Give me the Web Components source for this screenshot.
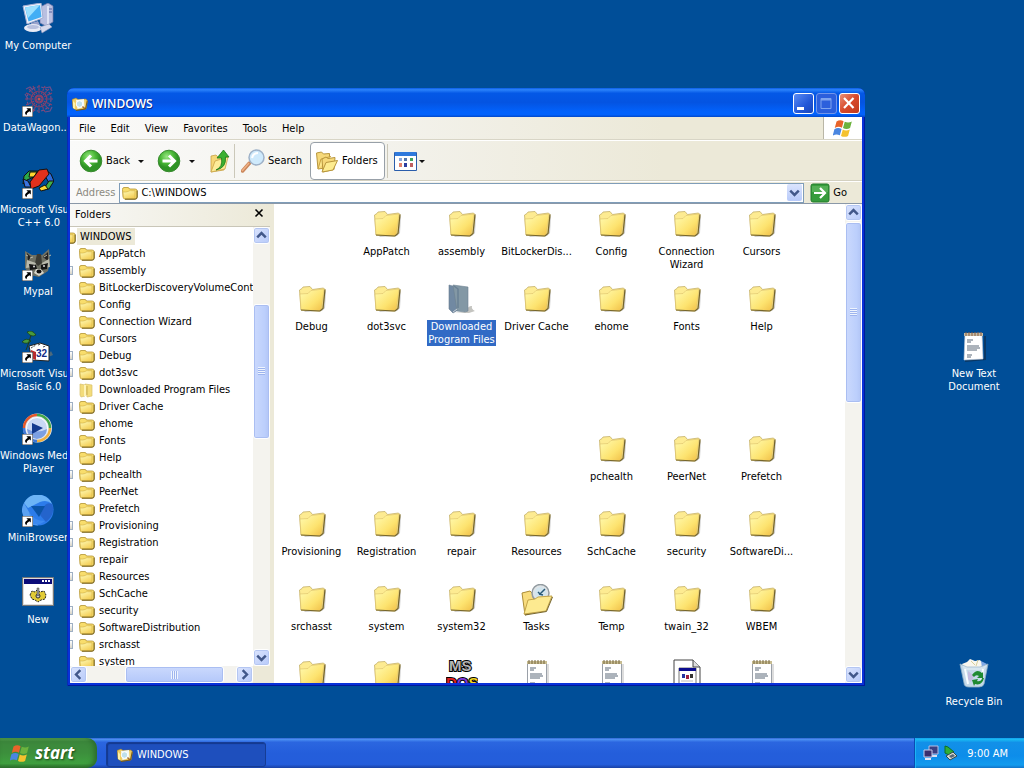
<!DOCTYPE html>
<html lang="en">
<head>
<meta charset="utf-8">
<title>WINDOWS</title>
<style>
  html, body { height: 100%; margin: 0; }
  body { font: 11px/13px "DejaVu Sans Condensed", "Noto Sans", sans-serif; color: #000; overflow: hidden; }
</style>
</head>
<body>
<xp-desktop>
  <desktop-icon slot="left" icon="computer">My Computer</desktop-icon>
  <desktop-icon slot="left" icon="wagon" shortcut>DataWagon....</desktop-icon>
  <desktop-icon slot="left" icon="vcpp" shortcut>Microsoft Visual<br>C++ 6.0</desktop-icon>
  <desktop-icon slot="left" icon="raccoon" shortcut>Mypal</desktop-icon>
  <desktop-icon slot="left" icon="vbasic" shortcut>Microsoft Visual<br>Basic 6.0</desktop-icon>
  <desktop-icon slot="left" icon="player" shortcut>Windows Media<br>Player</desktop-icon>
  <desktop-icon slot="left" icon="mini" shortcut>MiniBrowser</desktop-icon>
  <desktop-icon slot="left" icon="app">New</desktop-icon>
  <desktop-icon slot="right" icon="textfile">New Text<br>Document</desktop-icon>
  <desktop-icon slot="right" icon="recycle">Recycle Bin</desktop-icon>

  <explorer-window slot="window" heading="WINDOWS">
    <folder-tree slot="tree"></folder-tree>
    <file-grid slot="files"></file-grid>
  </explorer-window>

  <task-bar slot="taskbar" time="9:00 AM">
    <task-button>WINDOWS</task-button>
  </task-bar>
</xp-desktop>

<script>
(function () {
  // every icon is [viewBox size, markup]
  const FLAG = `<path d="M3 3q3-2 6-.3L7.600 8.200Q4.700 6.700 1.500 8.400z" fill="#e8642a"/><path d="M10 3.200q3 1.500 6-.2l-1.500 5.600q-3 1.600-6 0z" fill="#6cb33e"/><path d="M1.200 9.500q3-1.700 6.100-.2l-1.500 5.400q-3-1.500-6 .2z" fill="#4a86e0"/><path d="M8.300 9.800q3 1.500 6-.1l-1.500 5.500q-3 1.600-6 0z" fill="#f5c22e"/>`;
  const LINES = `<path d="M9 9h6M9 11h4M9 15h12M9 17h13M9 19h10M9 24h5M9 26h4" stroke="#5b6878"/>`;
  const ICONS = {
    flag: [17, FLAG],
    folder: [32, `<defs><linearGradient id="f" x2="1" y2="1"><stop stop-color="#fffcb4"/><stop offset=".6" stop-color="#fde36f"/><stop offset="1" stop-color="#efbc45"/></linearGradient></defs>
      <path d="M8 28l18-1 3-3 1-17-2 1z" fill="#555" opacity=".3"/>
      <path d="M3.500 6L6 4.500l1-1.500 7-.5L16.500 5.500l11-1.500 1.500 1.500-2 19-3 2.500-19-1z" fill="#fdeb92" stroke="#c4b06a" stroke-width=".8"/>
      <path d="M4 10l8-.5 3-3 13-1.500L25.500 25 23 27l-18-1z" fill="url(#f)" stroke="#dcc06a" stroke-width=".6"/>
      <path d="M29 5.500l-2 19-3 2.500-19-1" fill="none" stroke="#75652c" stroke-width="1.200"/>`],
    folderSmall: [16, `<defs><linearGradient id="s" x2=".6" y2="1"><stop stop-color="#fffcb8"/><stop offset="1" stop-color="#f4cf58"/></linearGradient></defs>
      <path d="M.500 4.500Q.500 2.500 2 2.500H6q1 0 1.500 1.500H13q2 0 2 1.500V12q0 2-2 2H3q-1.500 0-2-2z" fill="#f8dd6c" stroke="#b49432" stroke-width=".8"/>
      <path d="M1 7q3 .3 5-.5 1-.8 2.500-.8H13v7q0 1-1 1H3q-1.500 0-1.500-1.500z" fill="url(#s)" stroke="#d0ae48" stroke-width=".6"/>
      <path d="M15.200 5.500V12q0 2.200-2.200 2.200H3" fill="none" stroke="#75601c"/>`],
    ghostSmall: [16, `<path d="M1 2l5 1v11l-4 1-1-2zM6 2l7 1v11l-5 1z" fill="#f3dc7b" stroke="#d8c06a" stroke-width=".7"/><path d="M6 3v11" stroke="#fff4b8" stroke-width="2"/><path d="M8 4v9" stroke="#c9ae50"/>`],
    selected: [32, `<path d="M20 28q2-7 6-6-1 3 3 5l-6 2H8z" fill="#c4c4c0"/><path d="M3 1l7 2 2 23-5 3-4-4z" fill="#7189a2" stroke="#697c90" stroke-width=".6"/><path d="M7 1l15 2v24l-3 1-8-1z" fill="#8398a5" stroke="#6d8290" stroke-width=".6"/><path d="M8 2l4 3v19" fill="none" stroke="#6a8094" stroke-width="1.500"/><path d="M7 28l4-3" stroke="#c9d2d8"/>`],
    titleFolder: [16, `<path d="M0 3.500l4-1.500 2 1.500 8-.5 1.500 2-1.500 8-10 1L1 12z" fill="#f0cd62" stroke="#a07f2c" stroke-width=".6"/><path d="M4 4l8-1 .5 8-7 2z" fill="#f2f8f4"/><circle cx="7.500" cy="8" r="3.300" fill="#bfe0ec" stroke="#fff"/><path d="M10.500 10.500l2.500 2.500" stroke="#a86c30" stroke-width="1.500"/><path d="M1 5l2 2v6l-2-1z" fill="#fff3a8"/><path d="M15.200 5l-1.700 8-9.500 1.500" stroke="#75591a" fill="none"/>`],
    tasks: [32, `<path d="M1 9l8-2 3 3 2 18-10 3z" fill="#f8dc7d" stroke="#ab8c37"/><circle cx="19.500" cy="9" r="8.500" fill="#dfe4e7" stroke="#929ba0" stroke-width="1.500"/><circle cx="19.500" cy="9" r="6" fill="#d3e5ee"/><path d="M24 5l-5 5-2-2M18 10l4 1" stroke="#285a78" stroke-width="1.500" fill="none"/><path d="M3 30l4-14 7-1 3-2 14-1-6 15z" fill="#fdea90" stroke="#c4a448"/><path d="M31.500 13l-6 14.500L4 31" fill="none" stroke="#75652c"/>`],
    msdos: [32, `<g font-family="Liberation Sans" font-weight="700" font-size="15" stroke="#000" stroke-width="2" paint-order="stroke"><text x="3" y="12" fill="#b4b4b4">MS</text><text x="0" y="29" fill="#e02020">D<tspan fill="#7a38d8">O</tspan><tspan fill="#f2d620">S</tspan></text></g>`],
    exe: [32, `<path d="M3 1h19l7 7v24H3z" fill="#fff" stroke="#444"/><path d="M22 1v7h7" fill="#ddd" stroke="#444"/><path d="M8 9h17v16H8z" fill="#fff" stroke="#777"/><path d="M8 9h17v3H8z" fill="#0c0c8e"/><path d="M11 15h3v4h-3z" fill="#2434a0"/><path d="M15 16h3v4h-3z" fill="#a02040"/><path d="M19 15h3v4h-3z" fill="#333"/><path d="M10 22h12" stroke="#bbb"/>`],
    notepad: [32, `<path d="M7 29h20V5" fill="none" stroke="#777" opacity=".5"/><path d="M6.500 3h19v26h-19z" fill="#fff" stroke="#9aa0a8"/><path d="M6 2h20v3H6z" fill="#c8bd92"/><path d="M8 1v4M11 1v4M14 1v4M17 1v4M20 1v4M23 1v4" stroke="#75653c"/>${LINES}`],
    textfile: [32, `<path d="M7 30l20-2V5" fill="none" stroke="#123" stroke-width="2" opacity=".5"/><path d="M7 3l17-1 1 26-19 1z" fill="#fff" stroke="#c3cbd8" stroke-width=".6"/><path d="M6 2h19v3H6z" fill="#c4bda8"/><path d="M8 1v4M11 1v4M14 1v4M17 1v4M20 1v4M23 1v4" stroke="#8c5c3c"/>${LINES}`],
    computer: [32, `<path d="M18 4l8-4 5 3v16l-7 4-6-3z" fill="#b9bfe0" stroke="#6d76a8" stroke-width=".7"/><path d="M26 3v18" stroke="#dfe3f5" stroke-width="2"/><path d="M27 6h3M27 9h3" stroke="#5563a0"/><path d="M1 3l18-3 2 15-16 6z" fill="#eef1fb" stroke="#a3aed2"/><path d="M3 4.500L18 2l1.500 12L6.500 18.500z" fill="#42aef5"/><path d="M3 4.500L18 2 6 15z" fill="#9be0ff"/><path d="M9 20l7-2 2 4-8 3z" fill="#9aa3cc"/><ellipse cx="11" cy="25" rx="9" ry="4" fill="#e8ebf6"/><ellipse cx="11" cy="24" rx="6" ry="2" fill="#b8c0de"/><path d="M18 24l9-3 3 3-10 6z" fill="#d5d9ec" stroke="#8e97be" stroke-width=".6"/>`],
    wagon: [32, `<g fill="none" stroke="#8b3f68" stroke-width="1.200"><circle cx="17" cy="14" r="4"/><circle cx="17" cy="14" r="8"/><circle cx="17" cy="14" r="12" stroke-dasharray="3 1.500" stroke="#74508a"/><path d="M17 0v28M3 14h28M7 4l20 20M27 4L7 24M11 1l12 26M23 1L11 27M4 8l26 12M30 8L4 20" stroke-dasharray="2 1.300"/><path d="M4 4l4-2 3 3M23 3l5-1 2 4M30 22l-2 4-5 1M3 9l3 5" stroke="#6c4f8c"/></g><circle cx="17" cy="14" r="1.500" fill="#c25050"/>`],
    vcpp: [32, `<g stroke="#111"><path d="M7 4l9 0-2 5-9 4-4 4 1-8z" fill="#2ba84a"/><path d="M8 5l7 0-3 5-5 0z" fill="#ffd830"/><path d="M1 12l5 2 3 6-6 0z" fill="#3c74e0"/><path d="M25 4l4 3 3 7-5 2-5-9z" fill="#2f6bd8"/><path d="M27 14l5 0-5 8-6 1z" fill="#42b04a"/><path d="M17 21l6-3 3 4-7 2z" fill="#ffd830"/><path d="M8 15L17 3l8-1 2 5-10 12-8 3z" fill="#e2311d"/></g>`],
    raccoon: [32, `<path d="M3 2l7 4h10l7-6 1 13-2 9-9 6-9-2-5-7z" fill="#6e7064"/><path d="M5 4l4 4-3 4zM26 3l-5 5 5 4z" fill="#222"/><path d="M15 5h4l1 9-4 3-3-3z" fill="#3b3b34"/><path d="M5 11l9 3-2 4-8 1zM20 14l7-4 1 8-7 1z" fill="#b9baad"/><path d="M7 15l7 1 1 4-7 1zM19 16l7-2-1 6-6 1z" fill="#151515"/><circle cx="12" cy="17.500" r="1" fill="#ddd"/><circle cx="22" cy="17" r="1" fill="#ddd"/><path d="M14 20h5l3 4-5 3-5-3z" fill="#d8d6ca"/><ellipse cx="17" cy="22.500" rx="2.500" ry="2" fill="#111"/><path d="M4 6l2 1M27 7l2-1M8 9l3-1M22 8l3-2" stroke="#b9b9a8"/>`],
    vbasic: [32, `<path d="M24 27l7-3-2-4z" fill="#4e6a7c"/><path d="M5 1q5-3 9 3-5 3-9-3zM0 11q4-5 9-1-4 4-9 1z" fill="#4a9a3c" stroke="#143c12" stroke-width=".7"/><path d="M9 4q-2 8-5 15" stroke="#223c18" fill="none"/><path d="M7 15l11-3 9 3v15l-17-1z" fill="#fff" stroke="#222"/><path d="M9 17l5-3M16 14l3-1M21 16l3-1" stroke="#444" stroke-dasharray="2 1"/><path d="M9 19l5 2v8l-5-2z" fill="#b82c2c"/><text x="14" y="26" font-family="Liberation Sans" font-weight="700" font-size="10" fill="#102a86">32</text>`],
    player: [32, `<circle cx="15.500" cy="15" r="14.500" fill="#dfe6ee"/><path d="M15 2a13 13 0 0 1 13 13" stroke="#42a648" stroke-width="2.500" fill="none"/><path d="M28 15a13 13 0 0 1-13 13" stroke="#f0b040" stroke-width="2.500" fill="none"/><path d="M15 28A13 13 0 0 1 2 15" stroke="#3f78d8" stroke-width="2.500" fill="none"/><path d="M2 15A13 13 0 0 1 15 2" stroke="#e4582c" stroke-width="2.500" fill="none"/><circle cx="15" cy="15" r="10.500" fill="#c9d8f4" stroke="#fff"/><path d="M5 16q10 5 20 0a10 10 0 0 1-20 0" fill="#7c9fe2"/><path d="M10 10l11 5-11 6z" fill="#143a8e"/>`],
    mini: [32, `<circle cx="16" cy="15" r="15.500" fill="#2c7cea"/><path d="M2 8A15.500 15.500 0 0 1 30 9Q25 4 18 7L6 13z" fill="#6cb4f6"/><path d="M30 9q4 10-6 18l-6-7 5-10q3-3 7-1z" fill="#2464cc"/><path d="M2 8q-5 9 2 17 5 5 12 5.500L7 17z" fill="#5ba2f2"/><path d="M7 17q5 9 16 9-6 5-13 3z" fill="#3c8af0"/><path d="M9 11h14l-6 11z" fill="#0b55a8"/>`],
    app: [32, `<path d="M.5.500h31v28H.5z" fill="#ddd" stroke="#777"/><path d="M2 2h28v5H2z" fill="#0b0b78"/><path d="M20 4h2M23 4h2M26 4h2" stroke="#fff" stroke-width="2"/><path d="M2 7h28v20H2z" fill="#fff"/><path d="M8 18l2-4 3 1 2-2 3 2 4-1 2 4-1 4-4 1-3 2-3-2-3-1z" fill="#e2cb35" stroke="#222" stroke-dasharray="2 1"/><circle cx="16" cy="19" r="2" fill="#fff" stroke="#222"/><path d="M15 11h2v8h-2z" fill="#999" stroke="#444" stroke-width=".5"/>`],
    recycle: [32, `<path d="M4 5l5-2 3-3 5 2 5-1 3 4 4 1-3 5H6z" fill="#f8f6ee"/><path d="M13 2l4 4M20 1l-2 6" stroke="#d7cf9c"/><path d="M23 2l6 3-5 4z" fill="#7fa9e6"/><path d="M2 5l7 3h13l8-3-4 20q-1 3-5 3H11q-5 0-5-4z" fill="#d5e5f0" opacity=".92" stroke="#9bb7ca" stroke-width=".8"/><path d="M7 10l3 15M25 10l-2 14" stroke="#f8fdff" stroke-width="2"/><path d="M10 12l6 5-3 6-3-3z" fill="#c4bce0"/><path d="M14 16q5-7 10-2l1-1v6h-6l2-2q-3-2-5 1zM26 19q-2 8-9 6l-1 2-2-6 6-1-1 2q4 1 5-3z" fill="#1f8a32"/>`],
    back: [24, `<defs><radialGradient id="g" cx=".4" cy=".3"><stop stop-color="#9ae684"/><stop offset=".6" stop-color="#4cba38"/><stop offset="1" stop-color="#2f9426"/></radialGradient></defs><circle cx="12" cy="12" r="10.800" fill="url(#g)" stroke="#3a8a30"/><path d="M18.500 12H7M12 6.500L6.500 12l5.500 5.500" stroke="#fff" stroke-width="3" fill="none"/>`],
    forward: [24, `<defs><radialGradient id="g" cx=".4" cy=".3"><stop stop-color="#9ae684"/><stop offset=".6" stop-color="#4cba38"/><stop offset="1" stop-color="#2f9426"/></radialGradient></defs><circle cx="12" cy="12" r="10.800" fill="url(#g)" stroke="#3a8a30"/><path d="M5.500 12H17M12 6.500l5.500 5.500-5.500 5.500" stroke="#fff" stroke-width="3" fill="none"/>`],
    up: [24, `<path d="M3 7l5-1 2 2 7-1-1 14-13 2z" fill="#f6d777" stroke="#c29a38" stroke-width=".7"/><path d="M3 23l4-11 13-4-3 12z" fill="#fdec98" stroke="#caa548" stroke-width=".8"/><path d="M8 21q7-3 5.500-12H9L15.500 1 21 8h-3.500q1 11-9.500 13z" fill="#3cb030" stroke="#1d7a1a" stroke-width=".8"/>`],
    search: [24, `<path d="M1.500 22l7-8" stroke="#c9855a" stroke-width="3.500" stroke-linecap="round"/><path d="M1 22l7-8" stroke="#f0b184" stroke-width="1.500"/><circle cx="15.500" cy="8.500" r="7.500" fill="#cfeafc" stroke="#9fb2c8" stroke-width="1.500"/><path d="M11 9q1-5 6-5" stroke="#fff" stroke-width="2" fill="none"/>`],
    folders: [24, `<path d="M1.500 4l5-1 2 2 6-.5v14L3 20z" fill="#f6d97a" stroke="#b8963d"/><path d="M3 20l3-10 10-2.500" fill="#fdea90" stroke="#c8a040"/><path d="M7 10l4-2 2 1.500 7-1-1 12-11 2.500z" fill="#f6d97a" stroke="#b8963d"/><path d="M7 23l4-9.500 11.500-2L18 21z" fill="#fdec90" stroke="#b8963d"/>`],
    views: [24, `<path d="M.5 3.500h22v18H.5z" fill="#fff" stroke="#2a5dab"/><path d="M1 3h21v4H1z" fill="#2f79dc"/><path d="M5 9h3v3H5z" fill="#86a6dc"/><path d="M10 9h3v3h-3z" fill="#5577aa"/><path d="M16 9h3v3h-3z" fill="#3fa25c"/><path d="M5 14h3v4H5z" fill="#e2836c"/><path d="M10 14h3v4h-3z" fill="#2d3ea0"/><path d="M16 14h3v4h-3z" fill="#c06060"/>`],
    go: [20, `<rect x="1" y="1" width="18" height="18" rx="2" fill="#379c3c" stroke="#237a2c"/><path d="M2 3h16v6H2z" fill="#67bc65" opacity=".6"/><path d="M4 10h10M10 5l5 5-5 5" stroke="#fff" stroke-width="2.200" fill="none"/>`],
    chevron: [9, `<path d="M1 3l3.500 3.500L8 3" fill="none" stroke="#42588a" stroke-width="2"/>`],
    caret: [6, `<path d="M0 2h6L3 5z" fill="#111"/>`],
    network: [16, `<path d="M6 1h9v8H6z" fill="#3a3f82" stroke="#b6bde4"/><path d="M8 11h6" stroke="#dadff2" stroke-width="2"/><path d="M1 5h8v7H1z" fill="#3a2f6c" stroke="#c6cbea"/><path d="M2 14h6" stroke="#e2e5f4" stroke-width="2"/>`],
    usb: [16, `<path d="M2 1l3 1 6 5-5 3-4-2z" fill="#2fae38" stroke="#0e6e24"/><path d="M3 11l7-4 4 4-7 4z" fill="#d9dcd2" stroke="#30484c"/><path d="M6 11l4-2 2 2-4 2z" fill="#567"/>`],
    minimize: [21, `<path d="M4 14h7v3H4z" fill="#fff"/>`],
    maximize: [21, `<path d="M5 5.500h10v10H5z" fill="none" stroke="#7fa4ef"/><path d="M5 6.500h10" stroke="#7fa4ef" stroke-width="2"/>`],
    close: [21, `<path d="M5 5l9.500 10M14.500 5L5 15" stroke="#fff" stroke-width="2.200"/>`],
    cross: [10, `<path d="M1.500 1.500l7 7M8.500 1.500l-7 7" stroke="#000" stroke-width="1.600"/>`],
    arrow: [10, `<path d="M0 0h10v10H0z" fill="#fff" stroke="#333"/><path d="M4 2h4v4L6.700 4.800Q4 6 4 8.500 1 6 5.300 3.400z" fill="#000"/>`],
  };

  function define(name, html, setup) {
    if (customElements.get(name)) return;
    const tpl = document.createElement('template');
    tpl.innerHTML = html;
    customElements.define(name, class extends HTMLElement {
      connectedCallback() {
        if (this.shadowRoot) return;
        const root = this.attachShadow({ mode: 'open' });
        root.appendChild(tpl.content.cloneNode(true));
        if (setup) setup(this, root);
      }
    });
  }

  // <xp-icon name size>
  define('xp-icon', `<style>:host { display:block; flex:none; } svg { display:block; }</style>`, (host, root) => {
    const [box, body] = ICONS[host.getAttribute('name')];
    const size = host.getAttribute('size') || box;
    const holder = document.createElement('div');
    holder.innerHTML = `<svg width="${size}" height="${size}" viewBox="0 0 ${box} ${box}" aria-hidden="true">${body}</svg>`;
    root.appendChild(holder.firstChild);
  });

  define('xp-desktop', `
    <style>
      :host { display:flex; flex-direction:column; height:100vh; background:#004e98; }
      main { position:relative; flex:1; min-height:0; display:flex; justify-content:space-between; overflow:hidden; }
      .left, .right { display:flex; flex-direction:column; }
      .right { justify-content:flex-end; gap:246px; padding:0 12px 0 0; }
      ::slotted([slot=window]) { position:absolute; inset:88px 159px 52px 67px; }
    </style>
    <main>
      <div class="left"><slot name="left"></slot></div>
      <div class="right"><slot name="right"></slot></div>
      <slot name="window"></slot>
    </main>
    <slot name="taskbar"></slot>`);

  define('desktop-icon', `
    <style>
      :host { display:flex; flex-direction:column; align-items:safe center; gap:4px; flex:none;
              box-sizing:border-box; width:76px; height:82px; padding-top:3px; color:#fff; text-align:center; white-space:nowrap; }
      .art { position:relative; }
      .badge { position:absolute; left:0; bottom:0; }
    </style>
    <div class="art"></div>
    <span><slot></slot></span>`, (host, root) => {
    root.querySelector('.art').innerHTML = `<xp-icon name="${host.getAttribute('icon')}" size="32"></xp-icon>` +
      (host.hasAttribute('shortcut') ? '<xp-icon class="badge" name="arrow" size="11"></xp-icon>' : '');
  });

  // scroll bar; before / thumb / after are proportions of the track
  define('scroll-bar', `
    <style>
      :host { display:flex; flex-direction:column; flex:none; width:17px; background:#f4f3ee; }
      :host([horizontal]) { flex-direction:row; width:auto; height:17px; }
      button { flex:none; width:17px; height:17px; padding:0; border:1px solid #fff; border-radius:3px;
               background:linear-gradient(135deg, #dbe4fd, #b7cafa); box-shadow:inset 0 0 0 1px #b4c6f2;
               display:flex; align-items:center; justify-content:center; }
      .thumb { box-sizing:border-box; border:1px solid #fff; border-radius:3px; box-shadow:inset 0 0 0 1px #aabef2;
               background:linear-gradient(90deg, #cbd9fd, #bccffc 70%, #b2c5f6);
               display:flex; align-items:center; justify-content:center; }
      :host([horizontal]) .thumb { background:linear-gradient(#cbd9fd, #b4c8fa); }
      .grip { width:7px; height:8px; background:repeating-linear-gradient(#eef4fe 0 1px, #9db4ee 1px 2px); }
      :host([horizontal]) .grip { background:repeating-linear-gradient(90deg, #eef4fe 0 1px, #9db4ee 1px 2px); }
      .track { flex:1; display:flex; flex-direction:inherit; }
      .first { transform:rotate(180deg); }
      :host([horizontal]) .first { transform:rotate(90deg); }
      :host([horizontal]) .last { transform:rotate(-90deg); }
    </style>
    <button type="button" aria-label="Back"><xp-icon class="first" name="chevron" size="11"></xp-icon></button>
    <div class="track"><div></div><div class="thumb"><div class="grip"></div></div><div></div></div>
    <button type="button" aria-label="Forward"><xp-icon class="last" name="chevron" size="11"></xp-icon></button>`, (host, root) => {
    const parts = root.querySelector('.track').children;
    host.getAttribute('parts').split(' ').forEach((n, i) => { parts[i].style.flex = `${n} 0 0`; });
  });

  define('explorer-window', `
    <style>
      :host { display:flex; flex-direction:column; box-sizing:border-box; padding:0 3px 3px; background:#0831d9;
              border-radius:7px 7px 0 0; overflow:hidden; box-shadow:inset 1px 0 #0a2bb0, inset -1px -1px #001a9c; }
      button { font:inherit; color:inherit; background:none; border:0; padding:0; }
      header { display:flex; align-items:center; gap:4px; height:29px; margin:0 -3px; padding:2px 5px 0; box-sizing:border-box; color:#fff;
               background:linear-gradient(#0a5ce6, #2b83fb 6%, #0458e6 18%, #0454e2 50%, #0262fc 82%, #0262fc 92%, #0348c8); }
      h1 { flex:1; margin:0; font:600 12px/16px "Open Sans", "Noto Sans", sans-serif; text-shadow:1px 1px #0a2a8c; }
      .caption { display:flex; gap:2px; }
      .caption button { width:21px; height:21px; box-sizing:border-box; border:1px solid #fff; border-radius:3px;
                        display:flex; align-items:center; justify-content:center; background:linear-gradient(135deg, #5b8cf4, #2257d8 60%, #1945b8); }
      .caption .off { border-color:#7396ea; background:#2c5fdc; }
      .caption .shut { background:linear-gradient(135deg, #e99179, #d8492a 50%, #c03a1c); }
      .bar { display:flex; align-items:center; box-sizing:border-box; background:linear-gradient(90deg, #fafaf9, #f3f2ec 40%, #ece9d8 75%); }
      nav { height:23px; border-bottom:1px solid #d8d5c6; }
      nav div { flex:1; display:flex; gap:15px; padding-left:9px; }
      .logo { align-self:stretch; width:39px; box-sizing:border-box; display:flex; align-items:center; justify-content:center; background:#fff; border-left:1px solid #b9b6a6; }
      .tools { height:41px; padding-left:9px; border-bottom:1px solid #d3d0c0; border-top:1px solid #fff; }
      .tools button { display:flex; align-items:center; gap:3px; }
      .tools .drop { padding:0 13px 0 8px; }
      .sep { width:1px; height:34px; background:#cbc8b9; margin:0 6px 0 2px; }
      .tools .pressed { box-sizing:border-box; width:75px; height:38px; margin-left:8px; padding-left:4px; background:#fff; border:1px solid #98a0a8; border-radius:4px; }
      .tools .views { gap:1px; }
      .address { height:22px; gap:4px; padding-left:6px; border-top:1px solid #fff; }
      .address label { color:#8c8a80; }
      .combo { flex:1; display:flex; align-items:center; gap:3px; height:20px; box-sizing:border-box; padding:1px 1px 1px 2px; background:#fff; border:1px solid #7f9db9; }
      input { flex:1; min-width:0; border:0; padding:0; outline:0; font:inherit; color:#000; background:none; }
      .combo button { width:15px; height:17px; background:linear-gradient(#dbe4fd, #b7cafa); display:flex; align-items:center; justify-content:center; border-radius:2px; }
      .go { display:flex; align-items:center; gap:3px; margin:0 15px 0 2px; }
      .content { flex:1; min-height:0; display:flex; background:#fff; border-top:1px solid #8a98a8; }
      ::slotted([slot=tree]) { flex:none; width:204px; box-sizing:border-box; }
      ::slotted([slot=files]) { flex:1; min-width:0; }
    </style>
    <header>
      <xp-icon name="titleFolder" size="16"></xp-icon>
      <h1></h1>
      <div class="caption">
        <button type="button" aria-label="Minimize"><xp-icon name="minimize"></xp-icon></button>
        <button type="button" aria-label="Maximize" class="off"><xp-icon name="maximize"></xp-icon></button>
        <button type="button" aria-label="Close" class="shut"><xp-icon name="close"></xp-icon></button>
      </div>
    </header>
    <nav class="bar">
      <div>
        <button type="button">File</button><button type="button">Edit</button><button type="button">View</button>
        <button type="button">Favorites</button><button type="button">Tools</button><button type="button">Help</button>
      </div>
      <span class="logo"><xp-icon name="flag" size="20"></xp-icon></span>
    </nav>
    <div class="bar tools">
      <button type="button"><xp-icon name="back" size="24"></xp-icon>Back</button>
      <button type="button" class="drop" aria-label="Back history"><xp-icon name="caret"></xp-icon></button>
      <button type="button" aria-label="Forward"><xp-icon name="forward" size="24"></xp-icon></button>
      <button type="button" class="drop" aria-label="Forward history"><xp-icon name="caret"></xp-icon></button>
      <button type="button" aria-label="Up"><xp-icon name="up" size="24"></xp-icon></button>
      <span class="sep"></span>
      <button type="button"><xp-icon name="search" size="24"></xp-icon>Search</button>
      <button type="button" class="pressed"><xp-icon name="folders" size="24"></xp-icon>Folders</button>
      <span class="sep"></span>
      <button type="button" class="views" aria-label="Views"><xp-icon name="views" size="24"></xp-icon><xp-icon name="caret"></xp-icon></button>
    </div>
    <div class="bar address">
      <label for="path">Address</label>
      <div class="combo">
        <xp-icon name="folderSmall" size="16"></xp-icon>
        <input id="path" type="text" value="C:\\WINDOWS">
        <button type="button" aria-label="Show addresses"><xp-icon name="chevron" size="11"></xp-icon></button>
      </div>
      <button type="button" class="go"><xp-icon name="go" size="20"></xp-icon>Go</button>
    </div>
    <div class="content"><slot name="tree"></slot><slot name="files"></slot></div>`, (host, root) => {
    root.querySelector('h1').textContent = host.getAttribute('heading');
  });

  // + in front of a name marks a folder with children
  const TREE = ['AppPatch', '+assembly', 'BitLockerDiscoveryVolumeContents', 'Config', 'Connection Wizard', 'Cursors',
    '+Debug', '+dot3svc', 'Downloaded Program Files', '+Driver Cache', 'ehome', 'Fonts', 'Help', '+pchealth', 'PeerNet',
    'Prefetch', '+Provisioning', '+Registration', 'repair', '+Resources', 'SchCache', '+security',
    '+SoftwareDistribution', '+srchasst', 'system'];

  define('folder-tree', `
    <style>
      :host { display:flex; flex-direction:column; border-right:4px solid #ece9d8; background:#fff; }
      header { display:flex; justify-content:space-between; height:23px; box-sizing:border-box; padding:4px 6px 0 5px;
               background:linear-gradient(90deg, #f8f8f6, #ece9d8); border-bottom:1px solid #c9c6b8; }
      header button { border:0; background:none; padding:0; align-self:flex-start; }
      .body { flex:1; min-height:0; display:flex; }
      .view { flex:1; min-width:0; overflow:hidden; padding-top:1px; }
      ul { list-style:none; margin:0 0 0 -6px; padding:0; }
      li { display:flex; align-items:center; height:17px; white-space:nowrap; gap:4px; }
      .box { flex:none; box-sizing:border-box; width:9px; height:9px; margin-right:2px; }
      .box.on { border:1px solid #9fb0c4; background:linear-gradient(#fff, #d8d4c6); }
      .root { gap:1px; margin-left:-4px; }
      .root span { background:#ece9d8; padding:2px 3px; }
      footer { display:flex; background:#ece9d8; }
      scroll-bar[horizontal] { flex:1; margin-right:17px; }
    </style>
    <header>Folders<button type="button" aria-label="Close folders"><xp-icon name="cross" size="10"></xp-icon></button></header>
    <div class="body">
      <div class="view"><ul><li class="root"><xp-icon name="folderSmall" size="16"></xp-icon><span>WINDOWS</span></li></ul></div>
      <scroll-bar parts="60 134 211"></scroll-bar>
    </div>
    <footer><scroll-bar horizontal parts="39 98 12"></scroll-bar></footer>`, (host, root) => {
    const ul = root.querySelector('ul');
    TREE.forEach((entry) => {
      const name = entry.replace('+', '');
      const icon = name === 'Downloaded Program Files' ? 'ghostSmall' : 'folderSmall';
      ul.insertAdjacentHTML('beforeend',
        `<li><i class="box${name !== entry ? ' on' : ''}"></i><xp-icon name="${icon}" size="16"></xp-icon><span>${name}</span></li>`);
    });
  });

  define('file-item', `
    <style>
      :host { display:flex; flex-direction:column; align-items:center; gap:4px; text-align:center; white-space:nowrap; }
      .name { padding:0 1px; }
      :host([selected]) .name { background:#316ac5; color:#fff; }
    </style>
    <span class="name"><slot></slot></span>`, (host, root) => {
    root.querySelector('.name').insertAdjacentHTML('beforebegin', `<xp-icon name="${host.getAttribute('icon')}" size="32"></xp-icon>`);
  });

  // null leaves a slot of the grid empty
  const gap = (n) => Array(n).fill(null);
  const FILES = [null, 'AppPatch', 'assembly', 'BitLockerDis...', 'Config', 'Connection<br>Wizard', 'Cursors',
    'Debug', 'dot3svc', 'Downloaded<br>Program Files|selected', 'Driver Cache', 'ehome', 'Fonts', 'Help',
    ...gap(11), 'pchealth', 'PeerNet', 'Prefetch',
    'Provisioning', 'Registration', 'repair', 'Resources', 'SchCache', 'security', 'SoftwareDi...',
    'srchasst', 'system', 'system32', 'Tasks|tasks', 'Temp', 'twain_32', 'WBEM',
    '|folder', '|folder', '|msdos', '|notepad', '|notepad', '|exe', '|notepad'];

  define('file-grid', `
    <style>
      :host { display:flex; background:#fff; }
      .view { flex:1; min-width:0; overflow:hidden; padding-top:5px; }
      .grid { display:grid; grid-template-columns:repeat(auto-fill, 75px); grid-auto-rows:75px; }
    </style>
    <div class="view"><div class="grid"></div></div>
    <scroll-bar parts="1 180 265"></scroll-bar>`, (host, root) => {
    root.querySelector('.grid').innerHTML = FILES.map((f) => {
      if (f === null) return '<div></div>';
      const [name, icon = 'folder'] = f.split('|');
      return `<file-item icon="${icon}"${icon === 'selected' ? ' selected' : ''}>${name}</file-item>`;
    }).join('');
  });

  define('task-button', `
    <style>
      :host { display:block; }
      button { display:flex; align-items:center; gap:4px; box-sizing:border-box; width:160px; height:25px; padding:0 10px; font:inherit; color:#fff;
               border:1px solid #163c94; border-radius:3px; background:#1e4fbd; box-shadow:inset 1px 1px 1px #12378c; }
    </style>
    <button type="button"><xp-icon name="titleFolder" size="16"></xp-icon><slot></slot></button>`);

  define('task-bar', `
    <style>
      :host { display:flex; flex:none; height:30px; color:#fff;
              background:linear-gradient(#3168d5, #4a8ef2 5%, #2b66e0 14%, #245edb 50%, #245ddb 88%, #1941a5); }
      .start { display:flex; align-items:center; gap:5px; width:97px; height:30px; padding:0 0 0 10px; border:0; border-radius:0 10px 10px 0; color:#fff;
               font:italic 700 17px/22px "Open Sans", "Noto Sans", sans-serif; text-shadow:1px 1px 2px #1c4a17;
               background:linear-gradient(#5eac56, #3c873c 12%, #3c8f3c 50%, #3fa03f 85%, #2b6f2b); box-shadow:inset -3px 0 5px #2c6c2c; }
      .tasks { flex:1; display:flex; align-items:flex-end; padding:0 9px 1px; }
      .tray { display:flex; align-items:center; gap:4px; box-sizing:border-box; padding:0 16px 0 8px; border-left:1px solid #0a4cb4;
              background:linear-gradient(#12a0ee, #19b9f3 5%, #1290e8 15%, #0d8dea 60%, #129bee 90%, #1273c8); box-shadow:inset 1px 0 #1cb4f4; }
      time { margin-left:4px; }
    </style>
    <button type="button" class="start"><xp-icon name="flag" size="20"></xp-icon>start</button>
    <div class="tasks"><slot></slot></div>
    <div class="tray"><xp-icon name="network" size="16"></xp-icon><xp-icon name="usb" size="16"></xp-icon><time></time></div>`, (host, root) => {
    root.querySelector('time').textContent = host.getAttribute('time');
  });
})();
</script>
</body>
</html>
